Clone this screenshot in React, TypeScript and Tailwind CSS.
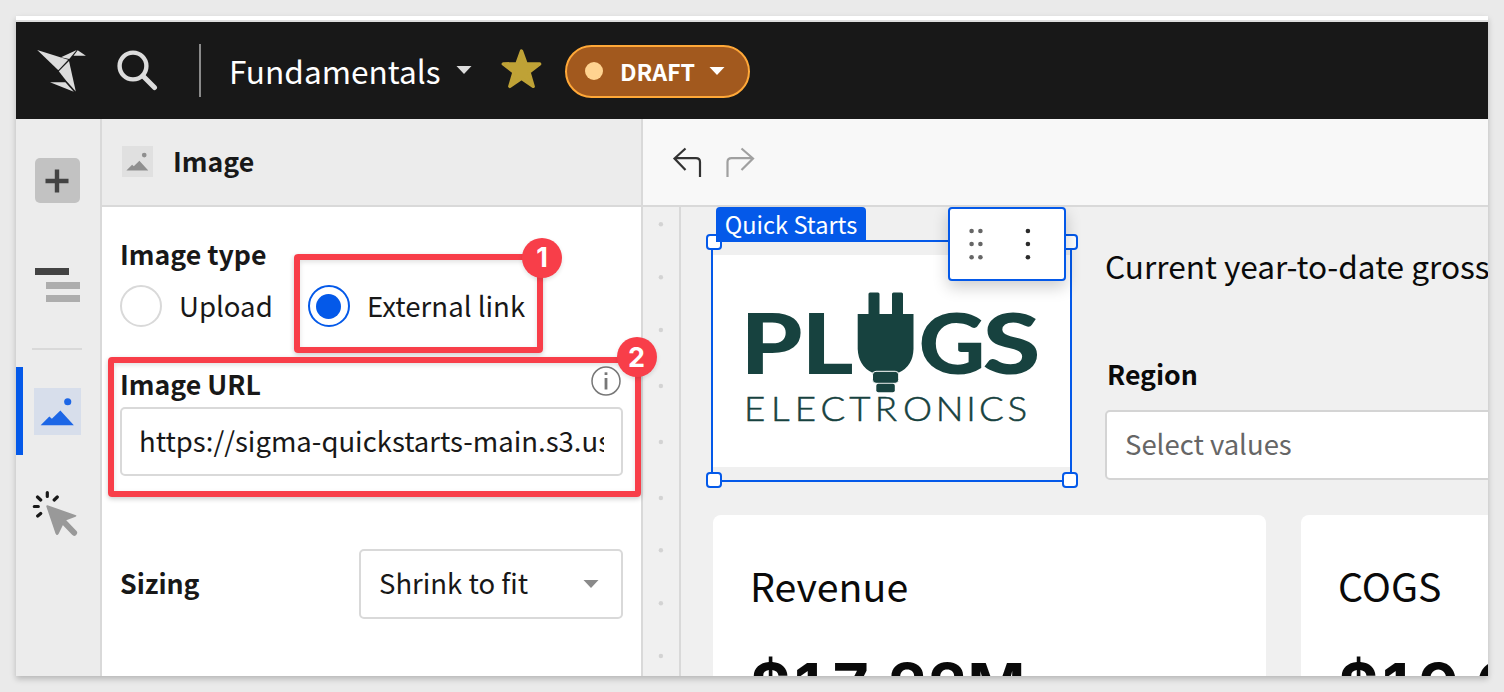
import type { ReactNode } from "react";

const SANS = "font-['Noto_Sans_CJK_SC','Noto_Sans',sans-serif]";

function Bird() {
  return (
    <svg width="50" height="42" viewBox="37 50 50 42" className="mt-[2px] shrink-0" fill="#dcdcdc">
      <path d="M37.2 50 L68.200 59.800 L58.300 70.200 Z" />
      <path d="M61 57.200 L76.700 50 L69.200 58.900 Z" />
      <path d="M77.700 50.300 L85.900 55.700 L73.500 55.700 Z" />
      <path d="M58.800 71.200 L69 61 L75.800 91.500 L66 80.500 Z" />
      <path d="M50 82.200 L65.400 82.200 L73.800 91.700 Z" />
    </svg>
  );
}

function Caret({ className }: { className: string }) {
  return (
    <svg width="16" height="8" viewBox="0 0 16 8" className={`shrink-0 ${className}`} fill="currentColor">
      <path d="M0.5 0 H15.5 L8 8 Z" />
    </svg>
  );
}

function TopBar() {
  return (
    <header className="flex h-[97px] shrink-0 items-center bg-[#181818] pl-[21px] pb-px text-white">
      <Bird />
      <svg width="42" height="42" viewBox="0 0 42 42" className="ml-[29px] mt-[2px] shrink-0" fill="none" stroke="#dcdcdc" strokeLinecap="round">
        <circle cx="17" cy="16" r="13.4" strokeWidth="4.4" />
        <path d="M27 26 L38.5 37.5" strokeWidth="5" />
      </svg>
      <div className="ml-[41px] mt-px h-[53px] w-[2px] bg-[#8a8a8a]" />
      <span className="ml-[28px] w-[213px] whitespace-nowrap text-[31.6px] leading-[48px]">Fundamentals</span>
      <Caret className="ml-[14px] text-[#dcdcdc]" />
      <svg width="41" height="41" viewBox="0 0 41 41" className="ml-[29px] mb-[2px] shrink-0" fill="#bfa236" stroke="#bfa236" strokeWidth="3.4" strokeLinejoin="round">
        <path d="M20.500 2 L25 14.600 L38.700 15 L28 23.200 L32.200 37.400 L20.500 29.300 L8.800 37.400 L13 23.200 L2.300 15 L16 14.600 Z" />
      </svg>
      <button className="ml-[23px] mt-[2px] flex h-[53px] w-[185px] items-center rounded-full border-2 border-[#ffa838] bg-[#a2591e] pl-[18px]">
        <span className="h-[18px] w-[18px] rounded-full bg-[#ffd390]" />
        <span className="mb-px ml-[17px] w-[74px] whitespace-nowrap text-[23.2px] font-bold leading-[36px]">DRAFT</span>
        <Caret className="ml-[15px] text-white" />
      </button>
    </header>
  );
}

function Picture({ size, fill, className }: { size: number; fill: string; className: string }) {
  return (
    <svg width={size} height={size} viewBox="0 0 46 46" className={className} fill={fill}>
      <circle cx="33" cy="13.5" r="3.5" />
      <path d="M6.5 36.5 L15 28 L17.5 30 L25.8 22 L39 36.5 Z" />
    </svg>
  );
}

function Rail() {
  return (
    <nav className="flex w-[86px] shrink-0 flex-col items-center border-r-2 border-[#d9d9d9] bg-[#ececec] pr-[2px]">
      <div className="mt-[39px] flex h-[45px] w-[45px] items-center justify-center rounded-[5px] bg-[#c2c2c2]">
        <svg width="24" height="24" viewBox="0 0 24 24" stroke="#434343" strokeWidth="4.4">
          <path d="M12 0.5 V23.5 M0.5 12 H23.5" />
        </svg>
      </div>
      <div className="mt-[65px] flex h-[34px] w-[45px] flex-col justify-between">
        <div className="h-[7px] w-[34px] bg-[#434343]" />
        <div className="ml-[11px] h-[7px] w-[34px] bg-[#adadad]" />
        <div className="ml-[11px] h-[7px] w-[34px] bg-[#adadad]" />
      </div>
      <div className="mt-[46px] h-[2px] w-[50px] bg-[#d9d9d9]" />
      <div className="mt-[17px] flex h-[88px] w-full items-center">
        <div className="h-full w-[7px] bg-[#0459e9]" />
        <Picture size={47} fill="#1c66e6" className="ml-[11px] bg-[#d7deeb]" />
      </div>
      <svg width="50" height="50" viewBox="32 488 50 50" className="mt-[33px]">
        <g stroke="#181818" strokeWidth="3.2" strokeLinecap="round">
          <path d="M47.3 492.5 V496.5 M37.5 497 L40.7 500 M57.3 497 L54.2 500 M34.3 506.5 H38.3 M37.7 516 L40.7 513.5" />
        </g>
        <path d="M47.5 505.2 L76 515.2 Q77 516 75.500 516.700 L65 520.700 L58.800 533.500 Q57 536.500 55.500 533.500 L46.300 506.400 Q46.300 504.900 47.500 505.200 Z" fill="#999" />
        <path d="M62 520 L74.200 532.800" stroke="#999" strokeWidth="5.800" strokeLinecap="round" />
      </svg>
    </nav>
  );
}

function Radio({ checked, children }: { checked?: boolean; children: ReactNode }) {
  return (
    <label className="flex items-center">
      <span
        className={
          checked
            ? "flex h-[42px] w-[42px] items-center justify-center rounded-full border-2 border-[#0459e9] bg-white"
            : "h-[42px] w-[42px] rounded-full border-2 border-[#d9d9d9] bg-white"
        }
      >
        {checked && <span className="mr-px h-[25px] w-[25px] rounded-full bg-[#0459e9]" />}
      </span>
      <span className="mb-[2px] ml-[17px] whitespace-nowrap text-[27.6px] leading-[40px]">{children}</span>
    </label>
  );
}

function Callout({ n, className, badge }: { n: number; className: string; badge: string }) {
  return (
    <div className={`absolute rounded-[4px] border-6 border-[#f83e49] shadow-[0_2px_5px_rgba(0,0,0,0.2),inset_0_2px_5px_rgba(0,0,0,0.12)] ${className}`}>
      <span className={`absolute flex h-10 w-10 items-center justify-center rounded-full bg-[#f83e49] font-['Inter',sans-serif] text-[27px] font-bold leading-none text-white shadow-[0_2px_4px_rgba(0,0,0,0.12)] ${badge}`}>
        {n}
      </span>
    </div>
  );
}

function ImagePanel() {
  return (
    <aside className="flex w-[541px] shrink-0 flex-col border-r-2 border-[#d9d9d9] bg-white text-[#181818]">
      <div className="flex h-[88px] shrink-0 items-center border-b-2 border-[#d9d9d9] bg-[#ececec] pb-[2px] pl-5">
        <Picture size={31} fill="#8f8f8f" className="bg-[#e0e0e0]" />
        <h2 className="ml-5 text-[26.7px] font-bold leading-[40px]">Image</h2>
      </div>
      <div className="flex flex-col pl-[18px] pr-[18px] pt-[27px]">
        <h3 className="text-[26.7px] font-bold leading-[40px]">Image type</h3>
        <div className="mt-[11px] flex h-[42px] items-center">
          <div className="w-[188px]"><Radio>Upload</Radio></div>
          <Radio checked>External link</Radio>
        </div>
        <div className="mt-[37px] flex items-center justify-between pr-[2px]">
          <h3 className="text-[26.7px] font-bold leading-[40px]">Image URL</h3>
          <svg width="30" height="30" viewBox="0 0 30 30" className="mb-[7px]" fill="none" stroke="#777">
            <circle cx="15" cy="15" r="14" strokeWidth="1.5" />
            <path d="M15 12 V23.5" strokeWidth="2.800" />
            <path d="M15 6.3 V9" strokeWidth="2.800" />
          </svg>
        </div>
        <div className="mt-[3px] flex h-[69px] items-center rounded-[5px] border-2 border-[#d9d9d9] bg-white px-[17px] pb-[3px]">
          <span className="min-w-0 overflow-hidden whitespace-nowrap text-[27.5px] leading-[44px]">https://sigma-quickstarts-main.s3.us-west-1</span>
        </div>
        <div className="mt-[73px] flex items-center justify-between">
          <h3 className="mb-[2px] text-[26.7px] font-bold leading-[40px]">Sizing</h3>
          <div className="flex h-[70px] w-[264px] items-center justify-between rounded-[5px] border-2 border-[#d9d9d9] pl-[18px] pr-[22px]">
            <span className="mb-[4px] text-[27.5px] leading-[44px]">Shrink to fit</span>
            <Caret className="text-[#8a8a8a]" />
          </div>
        </div>
      </div>
    </aside>
  );
}

function PlugsLogo() {
  return (
    <svg width="357" height="212" viewBox="713 255 357 212" fill="#17423f" className="font-['Lato',sans-serif]">
      <g fontSize="83" fontWeight="900">
        <text x="740.500" y="374" textLength="62" lengthAdjust="spacingAndGlyphs">P</text>
        <text x="801.500" y="374" textLength="52" lengthAdjust="spacingAndGlyphs">L</text>
        <text x="918.500" y="374" textLength="67" lengthAdjust="spacingAndGlyphs">G</text>
        <text x="982.500" y="374" textLength="58" lengthAdjust="spacingAndGlyphs">S</text>
      </g>
      <path d="M868.5 294 q0 -1.5 1.5 -1.5 h8 q1.5 0 1.5 1.5 V314 H892 V294 q0 -1.5 1.5 -1.5 h8 q1.5 0 1.5 1.5 V314 H913.5 V349 Q913 366 899 372.5 H872 Q858.500 366 857.700 349 V314 H868.500 Z" />
      <rect x="872.500" y="371.300" width="26.200" height="12" rx="3.500" stroke="#fff" />
      <rect x="876.300" y="383.700" width="18.500" height="8.500" rx="2" />
      <text
        transform="scale(1.08 1)"
        x="688.900 713.900 735.800 759.700 786.400 809.900 836.100 866.400 894.600 906.500 932.900"
        y="421.500"
        fontSize="34"
        fontWeight="300"
        stroke="#17423f"
        strokeWidth="0.500"
      >
        ELECTRONICS
      </text>
    </svg>
  );
}

function Handle({ className }: { className: string }) {
  return <span className={`absolute h-4 w-4 rounded-[4px] border-2 border-[#0459e9] bg-white ${className}`} />;
}

function ImageWidget() {
  return (
    <div className="relative mt-[33px] flex h-[242px] w-[361px] shrink-0 items-center justify-center border-2 border-[#0459e9]">
      <div className="h-[212px] w-full bg-white"><PlugsLogo /></div>
      <Handle className="-left-[7px] -top-2" />
      <Handle className="-right-[8px] -top-2" />
      <Handle className="-left-[7px] -bottom-2" />
      <Handle className="-right-[8px] -bottom-2" />
      <div className="absolute -top-[35px] left-[3px] flex h-[35px] w-[150px] items-center justify-center whitespace-nowrap rounded-t-[4px] bg-[#0459e9] text-[23.6px] leading-none text-white">
        Quick Starts
      </div>
      <div className="absolute -top-[35px] left-[235px] flex h-[74px] w-[118px] rounded-[4px] border-2 border-[#0459e9] bg-white shadow-[0_6px_16px_rgba(0,0,0,0.2)]">
        <svg width="114" height="70" viewBox="950 209 114 70">
          <g fill="#666">
            {[231, 244, 257.3].map((y) => (
              <g key={y}>
                <circle cx="971.600" cy={y} r="2.300" />
                <circle cx="980.400" cy={y} r="2.300" />
              </g>
            ))}
          </g>
          <g fill="#2b2b2b">
            {[231, 244, 257.3].map((y) => (
              <circle key={y} cx="1027.900" cy={y} r="2.300" />
            ))}
          </g>
        </svg>
      </div>
    </div>
  );
}

function Kpi({ title, value, className }: { title: string; value: string; className: string }) {
  return (
    <div className={`h-[240px] shrink-0 rounded-[8px] bg-white pl-[38px] pt-[40px] text-[#0a0a0a] ${className}`}>
      <div className="-ml-px text-[39.3px] leading-[60px]">{title}</div>
      <div className="-ml-px mt-[35px] whitespace-nowrap font-['Inter',sans-serif] text-[62px] font-bold tabular-nums leading-[72px]">{value}</div>
    </div>
  );
}

function Canvas() {
  return (
    <main className="flex min-w-0 flex-1 flex-col overflow-hidden bg-[#f0f0f0]">
      <div className="flex h-[88px] shrink-0 items-center border-b-2 border-[#d9d9d9] bg-[#f8f8f8] pl-[29px]">
        <svg width="84" height="32" viewBox="672 146 84 32" fill="none" strokeWidth="2.200">
          <path d="M685.500 148.500 L674.500 158.500 L685.500 170 M674.500 158.200 H696 Q700 158.200 700 162 V177" stroke="#333" />
          <path d="M741.500 148.500 L753 158.500 L741.500 170 M753 158.200 H731.500 Q727.500 158.200 727.500 162 V177" stroke="#a0a0a0" />
        </svg>
      </div>
      <div className="flex min-h-0 flex-1">
        <svg width="38" height="469" viewBox="643 207 36 469" className="shrink-0 border-r-2 border-[#d9d9d9]" fill="#d3d3d3">
          {[224.3, 277.3, 330, 386, 442, 498, 550.3, 603.3, 656].map((y) => (
            <circle key={y} cx="660.900" cy={y} r="2.200" />
          ))}
        </svg>
        <div className="min-w-0 flex-1 overflow-hidden pl-[30px]">
          <div className="flex h-[308px]">
            <ImageWidget />
            <div className="ml-[33px] w-[600px] shrink-0 text-[#0a0a0a]">
              <p className="mt-[34px] whitespace-nowrap text-[31.6px] leading-[48px]">Current year-to-date gross</p>
              <h3 className="ml-[2px] mt-[65px] text-[26.7px] font-bold leading-[40px]">Region</h3>
              <div className="mt-[16px] flex h-[70px] items-center rounded-[5px] border-2 border-[#d4d4d4] bg-white pb-[3px] pl-[18px] text-[27.5px] text-[#666]">
                Select values
              </div>
            </div>
          </div>
          <div className="flex gap-[35px] pl-[2px]">
            <Kpi title="Revenue" value="$17.22M" className="w-[553px]" />
            <Kpi title="COGS" value="$19.6M" className="w-[553px]" />
          </div>
        </div>
      </div>
    </main>
  );
}

export default function App() {
  return (
    <div className={`h-[692px] w-[1504px] overflow-hidden bg-[#eaeaea] p-4 ${SANS}`}>
      <div className="relative h-[660px] w-[1472px] shadow-[0_3px_6px_rgba(0,0,0,0.22)]">
        <div className="flex h-full flex-col overflow-hidden bg-white">
          <div className="h-[6px] shrink-0 border-b-2 border-[#dedede] bg-white" />
          <TopBar />
          <div className="flex min-h-0 flex-1">
            <Rail />
            <ImagePanel />
            <Canvas />
          </div>
        </div>
        <Callout n={1} className="left-[278px] top-[238px] h-[99px] w-[249px]" badge="-right-[25px] -top-[22.5px]" />
        <Callout n={2} className="left-[92px] top-[341px] h-[140px] w-[533px]" badge="-right-[21.5px] -top-[26px]" />
      </div>
    </div>
  );
}
